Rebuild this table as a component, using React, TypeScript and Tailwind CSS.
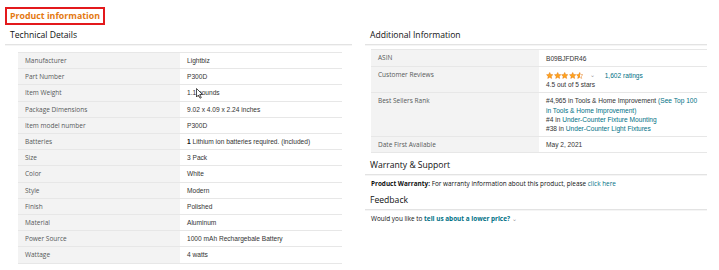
import React from "react";

const labelFont = { fontFamily: '"Open Sans", "Noto Sans", sans-serif' };

const techRows: [string, React.ReactNode][] = [
  ["Manufacturer", "Lightbiz"],
  ["Part Number", "P300D"],
  ["Item Weight", "1.1 pounds"],
  ["Package Dimensions", "9.02 x 4.09 x 2.24 inches"],
  ["Item model number", "P300D"],
  [
    "Batteries",
    <>
      <span className="font-bold text-[#111]">1</span> Lithium ion batteries required. (included)
    </>,
  ],
  ["Size", "3 Pack"],
  ["Color", "White"],
  ["Style", "Modern"],
  ["Finish", "Polished"],
  ["Material", "Aluminum"],
  ["Power Source", "1000 mAh Rechargebale Battery"],
  ["Wattage", "4 watts"],
];

function Star({ fill }: { fill: "full" | "half" }) {
  return (
    <svg width="7.4" height="7" viewBox="0 0 24 23">
      <defs>
        <linearGradient id="half">
          <stop offset="50%" stopColor="#ffa41c" />
          <stop offset="50%" stopColor="#ffffff" />
        </linearGradient>
      </defs>
      <path
        d="M12 1.5l3.1 6.6 7.2.9-5.3 5 1.4 7.1L12 17.6l-6.4 3.5 1.4-7.1-5.3-5 7.2-.9z"
        fill={fill === "full" ? "#ffa41c" : "url(#half)"}
        stroke="#e47911"
        strokeWidth="1.6"
        strokeLinejoin="round"
      />
    </svg>
  );
}

function Heading({ children }: { children: React.ReactNode }) {
  return (
    <div>
      <div className="pl-[5px] text-[8.6px] leading-[12px] text-[#0f1111]" style={labelFont}>
        {children}
      </div>
      <div className="mt-[3px] h-[2px] border-t border-[#e3e3e3] bg-[#f5f5f5]" />
    </div>
  );
}

function Row({ label, children, labelW }: { label: string; children: React.ReactNode; labelW: string }) {
  return (
    <div className="flex border-b border-[#e7e7e7]">
      <div
        className={`${labelW} shrink-0 bg-[#f3f3f3] py-[3px] pl-[7px] text-[6.5px] leading-[9.2px] text-[#565959]`}
        style={labelFont}
      >
        {label}
      </div>
      <div
        className="flex-1 py-[3px] pl-[7px] pr-[8px] text-[6.6px] leading-[9.2px] text-[#333]"
        style={{ fontFamily: '"Liberation Sans", Arial, sans-serif' }}
      >
        {children}
      </div>
    </div>
  );
}

export default function App() {
  return (
    <div className="relative h-[270px] w-[719px] overflow-hidden bg-white pl-[5px] pt-[7px]">
      {/* title box */}
      <div className="w-fit border-2 border-[#e3191c] px-[3px] py-[2px]">
        <div className="text-[8.8px] font-bold leading-[10px] text-[#e47911]" style={labelFont}>
          Product information
        </div>
      </div>

      <div className="mt-[4px] grid grid-cols-[347px_342px] gap-x-[13px]">
        {/* left column */}
        <div>
          <Heading>Technical Details</Heading>
          <div className="ml-[13px] mt-[6px] w-[324px] border-t border-[#e7e7e7]">
            {techRows.map(([label, value]) => (
              <Row key={label} label={label} labelW="w-[162px]">
                {value}
              </Row>
            ))}
          </div>
        </div>

        {/* right column */}
        <div>
          <Heading>Additional Information</Heading>
          <div className="ml-[6px] mt-[3px] w-[336px] border-t border-[#e7e7e7]">
            <Row label="ASIN" labelW="w-[168px]">
              <div className="py-[0.5px]">B09BJFDR46</div>
            </Row>
            <Row label="Customer Reviews" labelW="w-[168px]">
              <div className="flex h-[10px] items-center">
                <span className="flex gap-[0.2px]">
                  <Star fill="full" />
                  <Star fill="full" />
                  <Star fill="full" />
                  <Star fill="full" />
                  <Star fill="half" />
                </span>
                <span className="ml-[6px] text-[6px] leading-[6px] text-[#999]">⌄</span>
                <span className="ml-[10px] text-[#007185]">1,602 ratings</span>
              </div>
              <div>4.5 out of 5 stars</div>
            </Row>
            <Row label="Best Sellers Rank" labelW="w-[168px]">
              <div>
                #4,965 in Tools &amp; Home Improvement{" "}
                <span className="text-[#007185]">(See Top 100 in Tools &amp; Home Improvement)</span>
              </div>
              <div>
                #4 in <span className="text-[#007185]">Under-Counter Fixture Mounting</span>
              </div>
              <div>
                #38 in <span className="text-[#007185]">Under-Counter Light Fixtures</span>
              </div>
            </Row>
            <Row label="Date First Available" labelW="w-[168px]">
              May 2, 2021
            </Row>
          </div>

          <div className="mt-[6px]">
            <Heading>Warranty &amp; Support</Heading>
          </div>
          <div className="mt-[2.5px] pl-[6px] text-[6.4px] leading-[9px] text-[#0f1111]" style={labelFont}>
            <span className="font-bold">Product Warranty:</span> For warranty information about this product, please{" "}
            <span className="text-[#007185]">click here</span>
          </div>
          <div className="mt-[6.5px]">
            <Heading>Feedback</Heading>
          </div>
          <div className="mt-[2.5px] pl-[6px] text-[6.4px] leading-[9px] text-[#0f1111]" style={labelFont}>
            Would you like to <span className="font-bold text-[#007185]">tell us about a lower price?</span>{" "}
            <span className="text-[#999]">⌄</span>
          </div>
        </div>
      </div>

      {/* mouse pointer over "1.1 pounds" */}
      <svg className="absolute left-[196px] top-[88px]" width="7" height="11" viewBox="0 0 7 11">
        <path d="M0.5 0.5v8.5l2-2 1.5 3.2 1.3-.6-1.5-3.1h2.7z" fill="#fff" stroke="#222" strokeWidth="0.8" strokeLinejoin="round" />
      </svg>
    </div>
  );
}
